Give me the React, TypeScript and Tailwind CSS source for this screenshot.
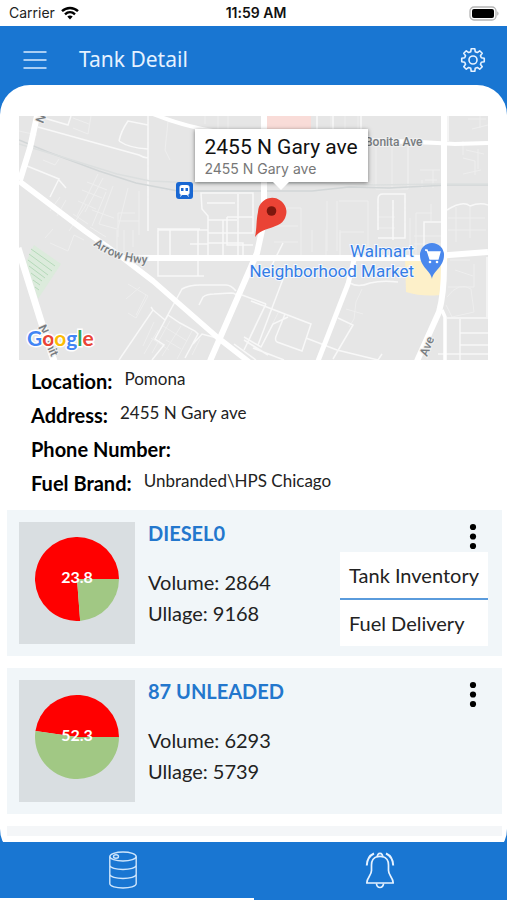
import React from 'react';

type Tank = {
    name: string;
    volume: number;
    ullage: number;
    percent: number;
};

const tanks: Tank[] = [
    { name: 'DIESEL0', volume: 2864, ullage: 9168, percent: 23.8 },
    { name: '87 UNLEADED', volume: 6293, ullage: 5739, percent: 52.3 },
];

const details = [
    { label: 'Location:', value: 'Pomona' },
    { label: 'Address:', value: '2455 N Gary ave' },
    { label: 'Phone Number:', value: '' },
    { label: 'Fuel Brand:', value: 'Unbranded\\HPS Chicago' },
];

// Outline of an eight-toothed gear around 12,12
const gearPoints = () => {
    const points: string[] = [];
    for (let tooth = 0; tooth < 8; tooth++) {
        const corners = [[-15, 8.6], [-9, 11.4], [9, 11.4], [15, 8.6]];
        corners.forEach(([offset, radius]) => {
            const angle = ((tooth * 45 + offset - 90) * Math.PI) / 180;
            points.push(`${(12 + radius * Math.cos(angle)).toFixed(2)},${(12 + radius * Math.sin(angle)).toFixed(2)}`);
        });
    }
    return points.join(' ');
};

const StatusBar = () => (
    <div className="grid h-[26px] shrink-0 grid-cols-3 items-center bg-white pr-2 pl-[9px] font-['Inter',sans-serif] text-sm text-[#222]">
        <div className="flex items-center gap-[6px]">
            <span>Carrier</span>
            <svg width="18" height="14" viewBox="0 0 18 14" fill="none" stroke="#000" strokeWidth="2.4">
                <path d="M1 5.2C5.5.9 12.5.9 17 5.2" />
                <path d="M4 8.3c2.9-2.7 7.1-2.7 10 0" />
                <path d="M6.3 10.6c1.6-1.4 3.8-1.4 5.4 0L9 13.4z" fill="#000" stroke="none" />
            </svg>
        </div>
        <span className="pl-1 text-center font-semibold text-[#111]">11:59 AM</span>
        <svg className="justify-self-end" width="30" height="15" viewBox="0 0 30 15">
            <rect x="1" y="1" width="26" height="13" rx="4" fill="#fff" stroke="#b5b5b5" strokeWidth="1.3" />
            <rect x="3" y="3" width="22" height="9" rx="2" fill="#000" />
            <path d="M28.3 5.3c1.6.8 1.6 3.6 0 4.4z" fill="#aaa" />
        </svg>
    </div>
);

const Header = () => (
    <header className="flex h-[59px] shrink-0 items-center px-[22px] pt-2 text-white">
        <button type="button" aria-label="Open menu">
            <svg width="26" height="24" viewBox="0 0 26 24" stroke="#d9ebff" strokeWidth="1.6">
                <path d="M1.5 4h23M1.5 12h23M1.5 20h23" />
            </svg>
        </button>
        <h1 className="ml-[31px] flex-1 pb-[2px] font-['Noto_Sans',sans-serif] text-[21px] leading-7 text-[#e6f2ff]">Tank Detail</h1>
        <button type="button" aria-label="Settings" className="-mr-px">
            <svg width="26" height="26" viewBox="-1 -1 26 26" fill="none" stroke="#e6f2ff" strokeWidth="1.6" strokeLinejoin="round">
                <polygon points={gearPoints()} />
                <circle cx="12" cy="12" r="4" />
            </svg>
        </button>
    </header>
);

const StreetMap = () => (
    <svg className="block h-[244px] w-full" viewBox="19 116 469 244" preserveAspectRatio="xMidYMid slice" fontFamily="Roboto, sans-serif">
        <rect x="19" y="116" width="469" height="244" fill="#e6e6e6" />
        <path d="M267 116h44v14h-44z" fill="#f9dcd8" />
        <path d="M405 258h43l-8 37q-18 2-34-3z" fill="#fdf0c9" />
        <path d="M34 245l27 19-23 35-12-37z" fill="#dcebdc" />
        <path d="M31 249l24 17M29 254l23 17M28 260l20 15M29 266l16 12M31 273l11 8M33 280l7 5M35 287l4 3" stroke="#b5d9b9" strokeWidth="1" fill="none" />

        {/* Lots and alleys */}
        <g fill="none" stroke="#eeeeee" strokeWidth="1">
            <path d="M91 116l-3 18-15-6M73 118l16 6M19 131l18 4M168 122l-3 28 5 10M43 160l12 5 4-6M86 205l-17 26M98 174l-21 42M103 178l-18 34M87 182l20 8M82 190l20 8M78 201l18 8M73 214l15 10M106 192l-14 34M92 210l22 8M113 186l-14 38 18 5M128 188l-10 40M139 191v44M135 213h-17v24M118 221h21M90 227l16 10M66 200l-9 16M60 197l-10 14" />
            <path d="M45 238l8-9M50 243l18 8 6-16 10 5M117 230v22M124 230v24M133 230v17M128 284l20 12-12 22-8-5M126 299l14-12M146 295l-10 20M154 322l-11 24M163 326l24 15M151 338l18 12M158 330l-14 24M170 321l-18 32M181 326l-19 30M192 331l-15 28M200 339l-8 16M166 340l15 9M205 116v8M218 116v14M228 116v16" />
            <path d="M331 116v19h-14v-19M345 116v20h13v-20M361 137v43M376 145v44h32v-44M392 145v42M408 145v43M420 170h20M433 170v18M425 180h12M422 180v8M466 150l18 4M463 158l12 3v14M478 149v20M463 174l18-4M463 141v14M468 119h18M472 129l16-4M480 116v12" />
            <path d="M327 201v50M337 201v50M339 201h29v49M378 217h17M378 228h17M410 218v35M416 213h16M416 213v42M431 204v17M414 236h30M414 244h30M284 208h17v48M270 208h14M274 226h24M274 242h24M312 230v22M340 230v27M326 230v27M450 260h20M455 270l18 6M447 297q12-16 24-8l3 23-22 5-6-12M448 287h26v-23M362 289l-6 13-2 17-5 8M346 309l17 5M250 336l14-29M263 343l16-32M456 207v35M470 207v31M448 218h37M448 230h38M340 257v-25h24" />
        </g>

        {/* Minor streets */}
        <g fill="none" stroke="#f8f8f8" strokeWidth="1.5">
            <path d="M38 127l101 28q5 3 9 3M44 118l24 7 3-9M119 141q2-10 9-20l20 4M119 141q10 7 29 8M27 166l32 13-9 18M59 180l7 8M148 116v115" />
            <path d="M317 116v19M333 116v14M361 116v16M378 143l65 1M201 193h52v40h-45v-17l-6-7zM207 203h28M238 194v65M208 220h29M223 220v38M158 230h50v28M158 229h42M158 228v48h46M198 230v46M170 230v28" />
            <path d="M227 217h26M227 217v28h26M378 230v-31q0-5 5-5h22v44h-27M393 200v40M424 256v-34h18M447 210q16-10 23-4 10-4 18-1M448 116v25M208 243h35v15M190 244h18" />
            <path d="M119 360l34-50 12 10M153 310l-2-3M165 320l17-31q7-4 18-4h26q5 0 10 6M199 305l4-8q4-3 11-3l17-1q5 0 8 5M152 360l12-15-9-6 13-24 12 8 15 8 3 3-13 24M217 338l-15-4-9 10M242 295l24 9M266 304l-22 46M244 337l17 10 12-23 15-7M267 275l16-32M251 301l60 23-9 27-25-9q-3-2 0-8l8-20M283 279l-25 66M306 338l31 12 41 10M338 318l15 7-20 34M378 360l4-6" />
            <path d="M350 283q8 5 20 0 12-3 28-1M447 318h41M460 319v41M460 333h28M460 345h28M487 257v60M438 354h50M244 340l24 15M234 344l22 16M253 348l31 12" />
        </g>

        {/* Railway */}
        <g fill="none" stroke="#d2d6d7" strokeWidth="1.5">
            <path d="M19 140l29 12 51 19 37 12 42 8h134l37-4 40 1 59-3h40" />
            <path d="M19 144l40 12 58 18 33 7 46 2h120l58 2 69-1h45" stroke="#dcdfdf" />
        </g>

        {/* Main roads */}
        <g fill="none" stroke="#fff" strokeLinejoin="round">
            <path d="M37 116l-7 32-10 32" strokeWidth="6" />
            <path d="M19 181l66 50 38 27 30 23 64 56 32 25" strokeWidth="5.5" />
            <path d="M123 258h296l30-3 39-3" strokeWidth="6" />
            <path d="M264 116v105l-7 32-47 108" strokeWidth="6" />
            <path d="M354 260l-6 24-30 77" strokeWidth="5" />
            <path d="M444 116v150q0 28-5 46l-22 49" strokeWidth="6" />
            <path d="M442 310l3 7v43" strokeWidth="3.5" />
            <path d="M153 114q30 12 60 17" strokeWidth="4" />
            <path d="M368 140l52 2 35 2 33-1" strokeWidth="4" />
            <path d="M18 248l22 70 14 43" strokeWidth="7" />
        </g>

        <g fill="#777c80" stroke="#f0f0f0" strokeWidth="2" paintOrder="stroke" fontSize="12" fontWeight="500">
            <path id="arrow-hwy" d="M93 245q24 19 62 19" fill="none" stroke="none" />
            <text>
                <textPath href="#arrow-hwy">Arrow Hwy</textPath>
            </text>
            <text x="365" y="146">Bonita Ave</text>
            <text transform="translate(427 357) rotate(-68)">Ave</text>
            <text transform="translate(43 124) rotate(-68)">N</text>
            <text transform="translate(38 327) rotate(66)">N Unit</text>
        </g>

        <rect x="176" y="182" width="17" height="17" rx="3" fill="#1967d2" />
        <path d="M181.500 185.500h6q1.500 0 1.500 1.500v6q0 1.500-1.500 1.500h-6q-1.500 0-1.500-1.500v-6q0-1.500 1.500-1.500zM182 194l-1.500 2.500M187 194l1.500 2.500" fill="#fff" stroke="#fff" />
        <path d="M181 188h2.500v3H181zM185.500 188h2.500v3h-2.500z" fill="#1967d2" />

        <g fill="#347de5" stroke="#f4f8ff" strokeWidth="2" paintOrder="stroke" fontSize="17" textAnchor="end">
            <text x="414" y="257">Walmart</text>
            <text x="414" y="277">Neighborhood Market</text>
        </g>
        <path d="M432 279c-1-8-12-12-12-24a12 12 0 0 1 24 0c0 12-11 16-12 24z" fill="#4a88ed" />
        <path d="M425 250h2l3 9h8l2-7h-12" fill="#fff" stroke="#fff" strokeWidth="1.3" />
        <circle cx="430" cy="262" r="1.3" fill="#fff" />
        <circle cx="437" cy="262" r="1.3" fill="#fff" />

        {/* Station pin */}
        <path d="M255 237c2-9 1-16 3-25a14.200 14.200 0 1 1 20 13c-8 4-17 4-23 12z" fill="#ea4335" />
        <circle cx="271.500" cy="211" r="4.800" fill="#7d170e" />

        <text x="27" y="346" fontFamily="Lato, sans-serif" fontSize="21" fontWeight="700" stroke="#fff" strokeWidth="3" paintOrder="stroke">
            <tspan fill="#4285f4">G</tspan>
            <tspan fill="#ea4335">o</tspan>
            <tspan fill="#fbbc05">o</tspan>
            <tspan fill="#4285f4">g</tspan>
            <tspan fill="#34a853">l</tspan>
            <tspan fill="#ea4335">e</tspan>
        </text>
    </svg>
);

const PieChart = ({ percent }: { percent: number }) => {
    const angle = (percent / 100) * 2 * Math.PI;
    const x = 42 + 42 * Math.cos(angle);
    const y = 42 + 42 * Math.sin(angle);
    const over = percent > 50;
    return (
        <div className="flex h-[122px] w-[116px] shrink-0 items-center justify-center bg-[#d9dee1]">
            <svg className="-mt-2" width="84" height="84" viewBox="0 0 84 84">
                <path d={`M42 42L${x} ${y}A42 42 0 ${over ? 0 : 1} 1 84 42z`} fill="#ff0000" />
                <path d={`M42 42H84A42 42 0 ${over ? 1 : 0} 1 ${x} ${y}z`} fill="#a1c884" />
                <text x="42" y="46" textAnchor="middle" fill="#fff" fontSize="16" fontWeight="700">{percent}</text>
            </svg>
        </div>
    );
};

const TankMenu = () => (
    <div className="absolute top-[42px] right-[14px] flex w-[148px] flex-col bg-white text-xl leading-[46px] text-[#222]">
        <button type="button" className="border-b-2 border-[#5a9bdc] pl-[9px] text-left">Tank Inventory</button>
        <button type="button" className="pl-[9px] text-left">Fuel Delivery</button>
    </div>
);

const TankCard = ({ tank, menuOpen }: { tank: Tank; menuOpen: boolean }) => (
    <article className="relative flex gap-[13px] bg-[#f1f6f9] py-3 pl-3">
        <PieChart percent={tank.percent} />
        <div className="flex-1 text-xl text-[#222]">
            <h2 className="mb-[22px] leading-[23px] font-bold text-[#2377cd]">{tank.name}</h2>
            <p className="leading-[31px]">Volume: {tank.volume}</p>
            <p className="leading-[31px]">Ullage: {tank.ullage}</p>
        </div>
        <button type="button" aria-label={`${tank.name} options`} className="mr-6 self-start">
            <svg width="10" height="30" viewBox="0 0 10 30">
                <circle cx="5" cy="5" r="3.1" />
                <circle cx="5" cy="14.5" r="3.1" />
                <circle cx="5" cy="24" r="3.1" />
            </svg>
        </button>
        {menuOpen && <TankMenu />}
    </article>
);

const TabBar = () => (
    <nav className="relative grid h-[58px] shrink-0 grid-cols-2 bg-[#1976d2]">
        <button type="button" aria-label="Tanks" className="flex items-center justify-center border-b-2 border-white pr-2">
            <svg width="30" height="38" viewBox="0 0 30 38" fill="none" stroke="#cfe6fc" strokeWidth="1.4">
                <ellipse cx="15" cy="5.5" rx="13.2" ry="4.5" />
                <path d="M1.8 5.5v27c0 6 26.4 6 26.4 0v-27M1.8 14c0 6 26.4 6 26.4 0M1.8 23c0 6 26.4 6 26.4 0" />
                <ellipse cx="8" cy="5.5" rx="2.5" ry="1.8" />
            </svg>
        </button>
        <button type="button" aria-label="Alerts" className="flex items-center justify-center border-b-2 border-transparent">
            <svg width="30" height="38" viewBox="0 0 30 38" fill="none" stroke="#e6f2ff" strokeWidth="1.7" strokeLinejoin="round">
                <path d="M12.5 5.5C8.500 6.500 6.500 10 6.500 14v5.500c0 5-4.700 7-4.700 12.500h26.400c0-5.500-4.700-7.500-4.700-12.500V14c0-4-2-7.500-6-8.500" />
                <path d="M12.500 5.700a2.600 2.600 0 1 1 5 0q-2.500-.8-5 0zM11.500 32.500a3.500 4 0 0 0 7 0" />
                <path d="M9 2.500C4.500 4.500 2 9 1.800 14.500M21 2.500c4.500 2 7 6.500 7.200 12" strokeWidth="2" />
            </svg>
        </button>
    </nav>
);

const App = () => {
    return (
        <div className="flex h-screen flex-col bg-[#1976d2] font-['Lato',sans-serif] [font-variant-ligatures:none]">
            <StatusBar />
            <Header />
            <main className="-mb-[17px] flex min-h-0 flex-1 flex-col overflow-hidden rounded-[30px] bg-white pb-[23px]">
                <div className="min-h-0 flex-1 overflow-y-auto pt-[31px] [scrollbar-width:none]">
                    <section className="relative mr-[19px] ml-[19px]">
                        <StreetMap />
                        <div className="absolute top-[13px] left-1/2 -ml-[59px] bg-white px-[10px] pt-[5px] pb-[5px] shadow-[0_1px_4px_rgba(0,0,0,0.5)]">
                            <p className="font-['Roboto',sans-serif] text-[21px] leading-[26px] text-[#111]">2455 N Gary ave</p>
                            <p className="font-['Inter',sans-serif] text-sm leading-[17px] text-[#777]">2455 N Gary ave</p>
                            <div className="absolute top-full left-1/2 -ml-2 border-x-8 border-t-8 border-x-transparent border-t-white" />
                        </div>
                    </section>
                    <dl className="pt-1 pb-[10px] pl-[31px]">
                        {details.map((detail) => (
                            <div key={detail.label} className="flex h-[34px] gap-3 text-black">
                                <dt className="text-xl leading-[34px] font-bold">{detail.label}</dt>
                                <dd className="text-[17px] leading-[30px] text-[#222]">{detail.value}</dd>
                            </div>
                        ))}
                    </dl>
                    <section className="flex flex-col gap-3 pr-[5px] pl-[7px]">
                        {tanks.map((tank, index) => (
                            <TankCard key={tank.name} tank={tank} menuOpen={index === 0} />
                        ))}
                        <div className="h-[146px] bg-[#f4f6f8]" />
                    </section>
                </div>
            </main>
            <TabBar />
        </div>
    );
};

export default App;
